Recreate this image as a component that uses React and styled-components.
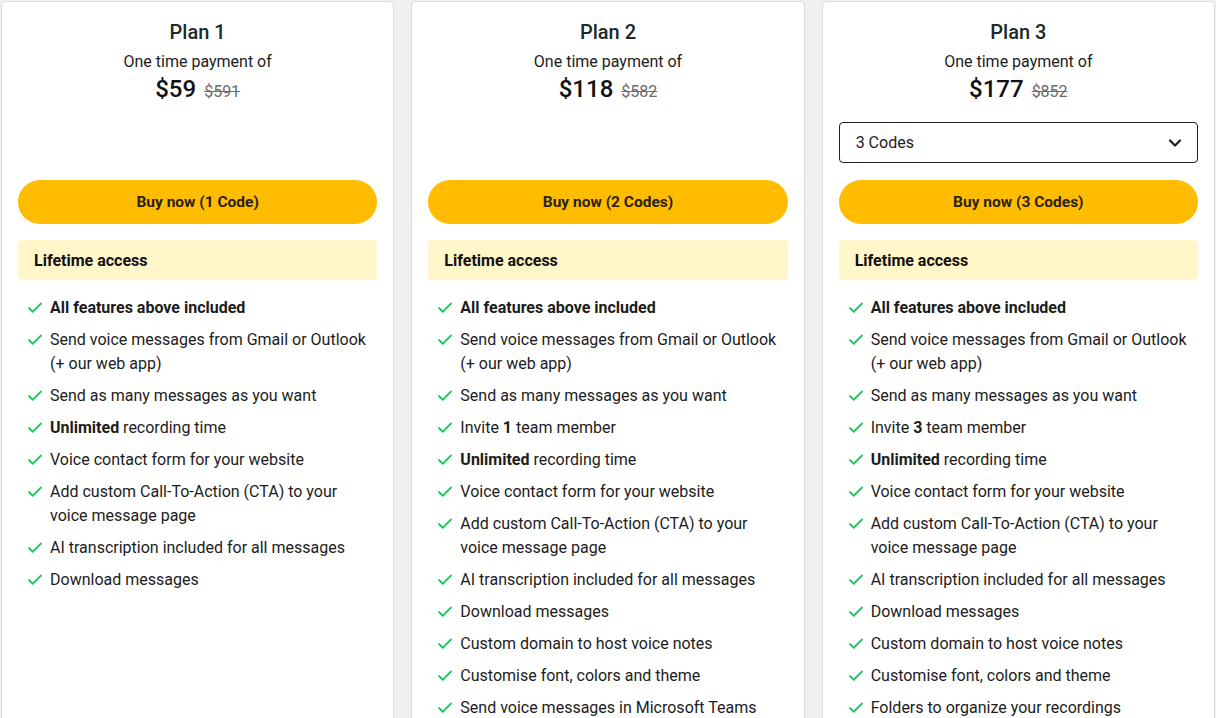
import React from 'react'
import styled, { createGlobalStyle } from 'styled-components'
import { Check, ChevronDown } from 'lucide-react'

const GlobalStyle = createGlobalStyle`
  body {
    margin: 0;
    background: #f0f0f0;
    font-family: Roboto, "Liberation Sans", sans-serif;
    color: #1c1c1c;
  }
`

const Page = styled.div`
  display: grid;
  grid-template-columns: repeat(3, 1fr);
  column-gap: 17px;
  padding: 1px 1px 0;
  background: #f0f0f0;
`

const Card = styled.div`
  background: #fff;
  border: 1px solid #dcdcdc;
  border-radius: 5px;
  padding: 16px 16px 40px;
  display: flex;
  flex-direction: column;
  min-height: 760px;
`

const Title = styled.div`
  text-align: center;
  font-size: 20px;
  line-height: 28px;
  font-weight: 500;
  color: #1b2a2a;
`

const Sub = styled.div`
  text-align: center;
  font-size: 16px;
  line-height: 24px;
  margin-top: 4px;
`

const PriceRow = styled.div`
  display: flex;
  justify-content: center;
  align-items: baseline;
  gap: 8px;
  line-height: 30px;
`

const Price = styled.span`
  font-size: 24px;
  font-weight: 500;
  color: #111;
`

const OldPrice = styled.span`
  font-size: 16px;
  color: #6b6b6b;
  text-decoration: line-through;
`

const SelectSlot = styled.div`
  height: 41px;
  margin-top: 15px;
  box-sizing: border-box;
  ${({ empty }) => !empty && `
    border: 1px solid #222;
    border-radius: 4px;
    display: flex;
    align-items: center;
    justify-content: space-between;
    padding: 0 12px 0 16px;
    font-size: 16px;
    color: #1c1c1c;
  `}
`

const BuyButton = styled.button`
  margin-top: 17px;
  height: 44px;
  border: 0;
  border-radius: 22px;
  background: #ffbc00;
  font-family: Roboto, "Liberation Sans", sans-serif;
  font-size: 15.5px;
  font-weight: 700;
  color: #2a2110;
  cursor: pointer;
`

const Lifetime = styled.div`
  margin-top: 16px;
  height: 40px;
  background: #fff7c9;
  border-radius: 4px;
  display: flex;
  align-items: center;
  padding-left: 16px;
  font-size: 16px;
  font-weight: 700;
  color: #111;
`

const List = styled.ul`
  list-style: none;
  margin: 16px 0 0;
  padding: 0 0 0 8px;
  display: flex;
  flex-direction: column;
  gap: 8px;
`

const Item = styled.li`
  display: flex;
  gap: 6px;
  font-size: 16px;
  line-height: 24px;
  color: #1c1c1c;
  font-weight: ${({ bold }) => (bold ? 700 : 400)};

  svg {
    flex: none;
    margin-top: 3px;
    color: #22c55e;
  }

  b {
    font-weight: 700;
  }
`

const base = [
  { t: 'All features above included', bold: true },
  { t: 'Send voice messages from Gmail or Outlook (+ our web app)' },
  { t: 'Send as many messages as you want' },
]

const tail = [
  { t: <><b>Unlimited</b> recording time</> },
  { t: 'Voice contact form for your website' },
  { t: 'Add custom Call-To-Action (CTA) to your voice message page' },
  { t: 'AI transcription included for all messages' },
  { t: 'Download messages' },
]

const plans = [
  {
    name: 'Plan 1', price: '$59', old: '$591', codes: '1 Code', select: false,
    features: [...base, ...tail],
  },
  {
    name: 'Plan 2', price: '$118', old: '$582', codes: '2 Codes', select: false,
    features: [
      ...base,
      { t: <>Invite <b>1</b> team member</> },
      ...tail,
      { t: 'Custom domain to host voice notes' },
      { t: 'Customise font, colors and theme' },
      { t: 'Send voice messages in Microsoft Teams' },
    ],
  },
  {
    name: 'Plan 3', price: '$177', old: '$852', codes: '3 Codes', select: true,
    features: [
      ...base,
      { t: <>Invite <b>3</b> team member</> },
      ...tail,
      { t: 'Custom domain to host voice notes' },
      { t: 'Customise font, colors and theme' },
      { t: 'Folders to organize your recordings' },
    ],
  },
]

const App = () => {
  return (
    <>
      <GlobalStyle />
      <Page>
        {plans.map(p => (
          <Card key={p.name}>
            <Title>{p.name}</Title>
            <Sub>One time payment of</Sub>
            <PriceRow>
              <Price>{p.price}</Price>
              <OldPrice>{p.old}</OldPrice>
            </PriceRow>
            {p.select ? (
              <SelectSlot>
                <span>{p.codes}</span>
                <ChevronDown size={20} strokeWidth={2.6} color="#1c1c1c" />
              </SelectSlot>
            ) : (
              <SelectSlot empty />
            )}
            <BuyButton>Buy now ({p.codes})</BuyButton>
            <Lifetime>Lifetime access</Lifetime>
            <List>
              {p.features.map((f, i) => (
                <Item key={i} bold={f.bold}>
                  <Check size={18} strokeWidth={2.4} />
                  <span>{f.t}</span>
                </Item>
              ))}
            </List>
          </Card>
        ))}
      </Page>
    </>
  )
}

export default App
